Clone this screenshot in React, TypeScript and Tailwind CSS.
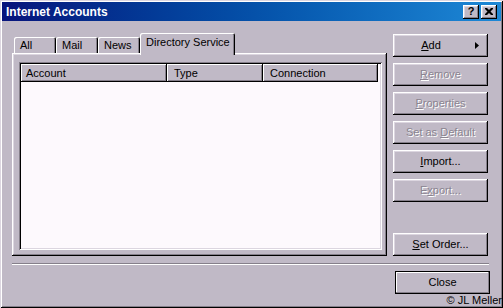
import React from "react";

const raised =
  "shadow-[inset_-1px_-1px_#000,inset_1px_1px_#fff,inset_-2px_-2px_#857f8a,inset_2px_2px_#dcd6e0]";

function Btn({
  children,
  disabled,
  extra = "",
}: {
  children: React.ReactNode;
  disabled?: boolean;
  extra?: string;
}) {
  return (
    <div
      className={`h-[23px] w-[95px] flex items-center justify-center bg-[#c0b9c6] ${raised} ${
        disabled ? "text-[#8a8490] [text-shadow:1px_1px_0_#fff]" : "text-black"
      } ${extra}`}
    >
      <span>{children}</span>
    </div>
  );
}

function Tab({ label, w, selected }: { label: string; w: string; selected?: boolean }) {
  if (selected) {
    return (
      <div
        className={`relative z-10 ${w} h-[22px] -mb-[2px] pl-[6px] pt-[3px] bg-[#c0b9c6] rounded-tl-[2px] rounded-tr-[2px] shadow-[inset_1px_1px_#fff,inset_-1px_0_#000,inset_-2px_0_#857f8a]`}
      >
        {label}
      </div>
    );
  }
  return (
    <div
      className={`${w} h-[16px] pl-[6px] pt-[2px] bg-[#c0b9c6] rounded-tl-[2px] rounded-tr-[2px] shadow-[inset_1px_1px_#fff,inset_-1px_0_#000,inset_-2px_0_#857f8a]`}
    >
      {label}
    </div>
  );
}

const headerCell =
  "h-[18px] flex items-center bg-[#c0b9c6] shadow-[inset_-1px_-1px_#000,inset_1px_1px_#fff,inset_-2px_-2px_#857f8a]";

export default function App() {
  return (
    <div className="w-[503px] h-[308px] overflow-hidden bg-[#c0b9c6] font-['Liberation_Sans',Arial,sans-serif] text-[11px] leading-[13px] text-black flex flex-col shadow-[inset_1px_1px_#dcd6e0,inset_-1px_-1px_#000,inset_2px_2px_#fff,inset_-2px_-2px_#857f8a]">
      {/* Title bar */}
      <div className="mx-[2px] mt-[2px] h-[19px] flex items-center bg-gradient-to-r from-[#08137c] to-[#1e88d6] pl-[4px] pr-[4px]">
        <span className="flex-1 text-white font-bold text-[12px] leading-[14px]">Internet Accounts</span>
        <div
          className={`w-[16px] h-[14px] flex items-center justify-center bg-[#c0b9c6] ${raised} font-bold text-[11px] leading-[11px]`}
        >
          ?
        </div>
        <div
          className={`ml-[2px] w-[16px] h-[14px] flex items-center justify-center bg-[#c0b9c6] ${raised}`}
        >
          <svg width="8" height="7" viewBox="0 0 8 7">
            <path d="M0 0h2l2 2 2-2h2v1L5.5 3.5 8 6v1H6L4 5 2 7H0V6l2.5-2.5L0 1z" fill="#000" />
          </svg>
        </div>
      </div>

      {/* Main */}
      <div className="flex pt-[12px] pl-[12px]">
        <div className="w-[375px] flex flex-col">
          <div className="flex items-end h-[20px] pl-[2px]">
            <Tab label="All" w="w-[42px]" />
            <Tab label="Mail" w="w-[42px]" />
            <Tab label="News" w="w-[42px]" />
            <Tab label="Directory Service" w="w-[95px]" selected />
          </div>
          <div
            className={`h-[203px] pt-[9px] pl-[7px] bg-[#c0b9c6] shadow-[inset_-1px_-1px_#000,inset_1px_1px_#fff,inset_-2px_-2px_#857f8a,inset_2px_2px_#dcd6e0]`}
          >
            <div className="w-[363px] h-[188px] p-[2px] bg-[#fdf9fd] shadow-[inset_1px_1px_#857f8a,inset_-1px_-1px_#fff,inset_2px_2px_#000,inset_-2px_-2px_#dcd6e0]">
              <div className="flex">
                <div className={`${headerCell} w-[146px] pl-[5px]`}>Account</div>
                <div className={`${headerCell} w-[96px] pl-[7px]`}>Type</div>
                <div className={`${headerCell} w-[115px] pl-[7px]`}>Connection</div>
              </div>
            </div>
          </div>
        </div>

        <div className="ml-[6px] w-[95px] pt-[1px] flex flex-col gap-[6px]">
          <div className={`h-[23px] w-[95px] flex items-center bg-[#c0b9c6] ${raised}`}>
            <span className="flex-1 text-center pl-[2px] pr-[8px]">
              <u>A</u>dd
            </span>
            <svg width="4" height="7" viewBox="0 0 4 7" className="mr-[9px]">
              <path d="M0 0L4 3.5L0 7z" fill="#000" />
            </svg>
          </div>
          <Btn disabled>
            <u>R</u>emove
          </Btn>
          <Btn disabled>
            <u>P</u>roperties
          </Btn>
          <Btn disabled>
            Set as <u>D</u>efault
          </Btn>
          <Btn>
            <u>I</u>mport...
          </Btn>
          <Btn disabled>
            E<u>x</u>port...
          </Btn>
          <Btn extra="mt-[25px]">
            <u>S</u>et Order...
          </Btn>
        </div>
      </div>

      {/* Separator */}
      <div className="ml-[12px] mt-[7px] w-[477px] h-[2px] border-t border-t-[#857f8a] border-b border-b-white" />

      {/* Close */}
      <div className="flex justify-end pr-[13px] mt-[6px]">
        <div className="w-[95px] h-[23px] border border-black">
          <div
            className={`w-full h-full flex items-center justify-center bg-[#c0b9c6] shadow-[inset_-1px_-1px_#857f8a,inset_1px_1px_#fff]`}
          >
            Close
          </div>
        </div>
      </div>

      <div className="flex justify-end pr-[1px] text-[11px] leading-[13px]">© JL Meller</div>
    </div>
  );
}
